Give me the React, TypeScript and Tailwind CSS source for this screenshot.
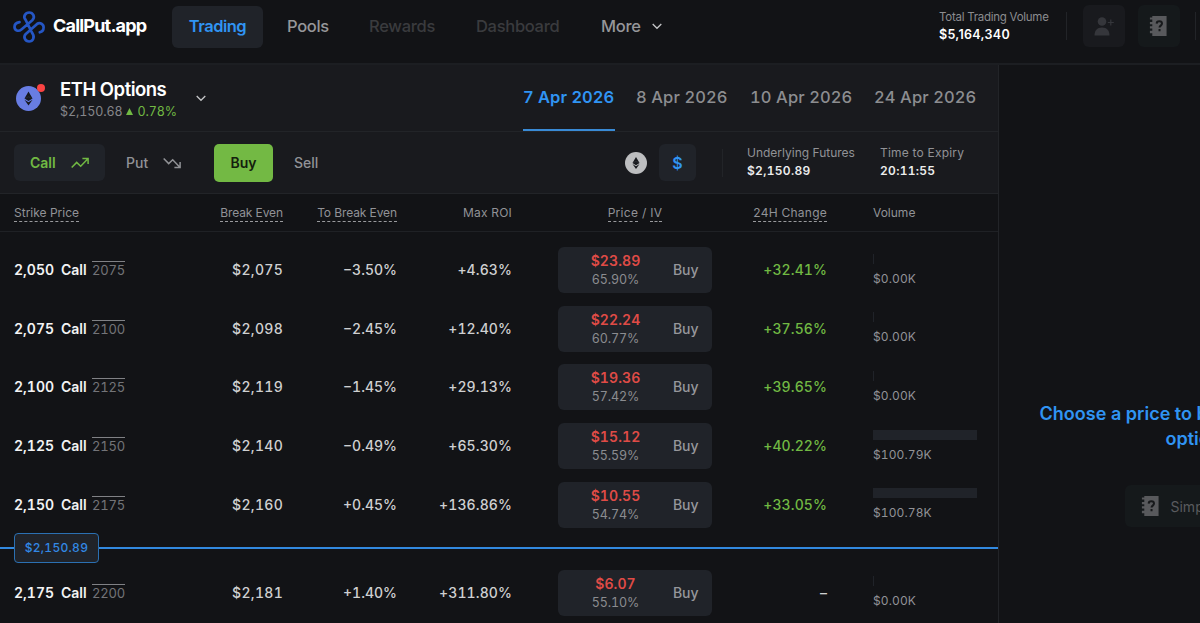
import clsx from "clsx";

const rows = [
  { strike: "2,050", cap: "2075", even: "$2,075", toEven: "−3.50%", roi: "+4.63%", price: "$23.89", iv: "65.90%", change: "+32.41%", volume: "$0.00K" },
  { strike: "2,075", cap: "2100", even: "$2,098", toEven: "−2.45%", roi: "+12.40%", price: "$22.24", iv: "60.77%", change: "+37.56%", volume: "$0.00K" },
  { strike: "2,100", cap: "2125", even: "$2,119", toEven: "−1.45%", roi: "+29.13%", price: "$19.36", iv: "57.42%", change: "+39.65%", volume: "$0.00K" },
  { strike: "2,125", cap: "2150", even: "$2,140", toEven: "−0.49%", roi: "+65.30%", price: "$15.12", iv: "55.59%", change: "+40.22%", volume: "$100.79K" },
  { strike: "2,150", cap: "2175", even: "$2,160", toEven: "+0.45%", roi: "+136.86%", price: "$10.55", iv: "54.74%", change: "+33.05%", volume: "$100.78K" },
  { strike: "2,175", cap: "2200", even: "$2,181", toEven: "+1.40%", roi: "+311.80%", price: "$6.07", iv: "55.10%", change: "–", volume: "$0.00K" },
];

const columns = "grid grid-cols-[153px_130px_114px_115px_200px_115px_171px]";

function Logo() {
  return (
    <svg width="32" height="32" viewBox="0 0 32 32" fill="none" stroke="#2556c4" strokeWidth="2.7" strokeLinecap="round" strokeLinejoin="round">
      <path d="M6.500 11.200C3.500 11.700 1.500 13.500 1.500 16c0 3.400 3.900 5 6.900 2.500L19.300 9.300C22.600 6 20 1.500 16.200 1.500s-6.600 4.300-3.600 7.300l6.900 13.800c2.600 3.800.3 7.900-3.400 7.900s-6.400-4.200-3.300-7.600l11-9.700c3.300-2.400 6.800 0 6.800 3.200 0 2.400-1.500 4.200-3.800 4.900" />
    </svg>
  );
}

function Ether({ size, color }: { size: number; color: string }) {
  return (
    <svg width={size} height={size} viewBox="0 0 26 26">
      <circle cx="13" cy="13" r="13" fill={color} />
      <path d="M13 5.800 8.800 13.100 13 15.600l4.200-2.500zM8.800 14.300 13 20.200l4.200-5.900-4.200 2.500z" fill="#17191e" />
      <path d="m8.800 13.100 4.200-1.900 4.200 1.900" stroke={color} strokeOpacity=".3" strokeWidth=".5" fill="none" />
    </svg>
  );
}

function Chevron() {
  return (
    <svg width="10" height="7" viewBox="0 0 10 7" fill="none" stroke="#c4c5c7" strokeWidth="1.3">
      <path d="m.7 1 4.300 4.300L9.300 1" />
    </svg>
  );
}

function Trend({ down }: { down?: boolean }) {
  return (
    <svg className={clsx(down && "-scale-y-100")} width="18" height="12" viewBox="0 0 18 12" fill="none" stroke="currentColor" strokeWidth="1.5">
      <path d="m.7 10.600 5-5.200 4 3.800L16.600 2M11.400 1.400h5.700v5.700" />
    </svg>
  );
}

function GuideIcon() {
  return (
    <svg width="18" height="20" viewBox="0 0 18 21">
      <path d="M3 0h15v21H3v-3H.5v-2.400H3v-2.400H.5v-2.400H3V8.600H.5V6.200H3V3.800H.5V1.600H3z" fill="#58595c" />
      <path d="M7.600 8c.1-3.300 5.600-3.200 5.600 0 0 2-2.600 2.200-2.600 4.100M10.600 13.700v2.200" stroke="#17191b" strokeWidth="2.100" fill="none" />
    </svg>
  );
}

function UserPlus() {
  return (
    <svg width="20" height="19" viewBox="0 0 20 19" fill="#35363b">
      <circle cx="8" cy="4.500" r="4.300" />
      <path d="M.5 18.500C.5 13.500 3 10.500 8 10.500s7.500 3 7.500 8z" />
      <path d="M16.200 2.500h1.200v2.400h2.400v1.200h-2.400v2.400h-1.200V6.100h-2.400V4.900h2.400z" />
    </svg>
  );
}

function Header() {
  return (
    <header className="flex h-[65px] shrink-0 border-b-2 border-[#1c1e22]">
      <div className="flex h-[53px] w-[172px] shrink-0 items-center pl-[13px]">
        <Logo />
        <span className="ml-2 whitespace-nowrap pb-0.5 text-[18px] font-bold tracking-[-0.8px] text-white">CallPut.app</span>
      </div>
      <nav className="flex h-[53px] w-[767px] shrink-0 items-center text-[16.500px] font-medium tracking-[-0.3px] text-[#96979a]">
        <span className="flex h-[42px] w-[91px] items-center justify-center rounded-md bg-[#202329] font-semibold tracking-[-0.5px] text-[#3094f3]">Trading</span>
        <span className="ml-6 w-[82px]">Pools</span>
        <span className="w-[107px] text-[#3a3b3e]">Rewards</span>
        <span className="w-[125px] text-[#3a3b3e]">Dashboard</span>
        <span className="mr-[11px]">More</span>
        <Chevron />
      </nav>
      <div className="h-[53px] w-[127px] pt-[9px]">
        <p className="whitespace-nowrap text-[11.500px] leading-[16px] tracking-[-0.26px] text-[#8b8c8f]">Total Trading Volume</p>
        <p className="pt-px text-[12.500px] font-semibold leading-[18px] tracking-[0.3px] text-white">$5,164,340</p>
      </div>
      <div className="mt-3 h-7 w-[17px] border-l border-[#222428]" />
      <div className="mt-[5px] flex h-[42px] w-[42px] items-center justify-center rounded-md bg-[#191a1e]"><UserPlus /></div>
      <div className="ml-[13px] mt-[5px] flex h-[42px] w-[42px] items-center justify-center rounded-md bg-[#15191b] pr-[2px]"><GuideIcon /></div>
      <div className="ml-[15px] mt-3 h-7 border-l border-[#222428]" />
    </header>
  );
}

function MarketBar() {
  return (
    <div className="flex h-[67px] shrink-0 border-b border-[#222428] bg-[#191a1e]">
      <div className="flex w-[523px] items-center pl-4">
        <div className="relative">
          <Ether size={25} color="#687de3" />
          <span className="absolute -right-[4px] -top-[2px] size-2 rounded-full bg-[#fa4343]" />
        </div>
        <div className="ml-[19px] w-[136px]">
          <h1 className="text-[18.500px] font-semibold leading-[25px] tracking-[-0.5px] text-white">ETH Options</h1>
          <p className="flex items-center pt-px text-[12.500px] leading-[17px] tabular-nums tracking-[-0.1px] text-[#85868a]">
            $2,150.68
            <svg className="mx-1" width="7" height="7" viewBox="0 0 7 7"><path d="M3.500 0 7 7H0z" fill="#71b943" /></svg>
            <span className="text-[#71b943]">0.78%</span>
          </p>
        </div>
        <Chevron />
      </div>
      <div className="flex h-[66px] gap-[21px] whitespace-nowrap text-[16.500px] font-medium leading-[65px] tabular-nums tracking-[0.1px] text-[#8c8d90]">
        <span className="w-[92px] border-b-2 border-[#398ad5] font-semibold tracking-[0px] text-[#3094f3]">7 Apr 2026</span>
        <span className="w-[93px]">8 Apr 2026</span>
        <span className="w-[103px]">10 Apr 2026</span>
        <span className="w-[103px]">24 Apr 2026</span>
      </div>
    </div>
  );
}

function TradeBar() {
  return (
    <div className="flex h-[62px] shrink-0 items-center border-b border-[#222428] bg-[#191a1e] pl-[14px] text-[14px] font-medium text-[#919296]">
      <div className="flex h-[37px] w-[91px] items-center justify-between rounded-md bg-[#202329] px-4 font-semibold text-[#71b943]">Call <Trend /></div>
      <div className="ml-[21px] flex w-[55px] items-center justify-between">Put <Trend down /></div>
      <div className="ml-[33px] flex h-[38px] w-[59px] items-center justify-center rounded-[5px] bg-[#73b944] font-semibold text-[#14200d]">Buy</div>
      <span className="ml-[21px] w-[331px]">Sell</span>
      <Ether size={22} color="#bdbec0" />
      <div className="ml-3 flex h-[37px] w-[37px] items-center justify-center rounded-md bg-[#202329] text-[16px] font-semibold text-[#3094f3]">$</div>
      <div className="ml-[26px] h-7 w-[25px] border-l border-[#222428]" />
      <div className="w-[133px] pb-[2px] text-[12px] font-normal leading-[18px]">
        <p>Underlying Futures</p>
        <p className="font-semibold tabular-nums tracking-[0.3px] text-[#eceded]">$2,150.89</p>
      </div>
      <div className="pb-[2px] text-[12px] font-normal leading-[18px]">
        <p className="tracking-[0.2px]">Time to Expiry</p>
        <p className="font-semibold tabular-nums tracking-[0.3px] text-[#eceded]">20:11:55</p>
      </div>
    </div>
  );
}

const hint = "border-b border-dashed border-[#999a9d] pb-px";

function TableHead() {
  return (
    <div className={clsx(columns, "h-[38px] shrink-0 items-center border-b border-[#1f2125] text-right text-[12px] leading-[16px] text-[#919296]")}>
      <div className="pl-[14px] text-left"><span className={hint}>Strike Price</span></div>
      <div className="tracking-[-0.1px]"><span className={hint}>Break Even</span></div>
      <div className="tracking-[-0.1px]"><span className={hint}>To Break Even</span></div>
      <div className="tracking-[0.2px]">Max ROI</div>
      <div className="pl-[46px] text-center tracking-[0.3px]"><span className={hint}>Price</span> / <span className={hint}>IV</span></div>
      <div className="tracking-[0.25px]"><span className={hint}>24H Change</span></div>
      <div className="pl-[46px] text-left">Volume</div>
    </div>
  );
}

function OptionRow({ row }: { row: (typeof rows)[number] }) {
  const traded = row.volume !== "$0.00K";
  return (
    <div className={clsx(columns, "h-[58.600px] shrink-0 items-center text-right text-[14px] font-medium tabular-nums tracking-[0.1px] text-[#cfd0d1]")}>
      <div className="flex items-center pb-px pl-[14px] font-semibold tracking-[0px] text-[#f3f3f4]">
        <span className="w-[47px] text-left">{row.strike}</span>
        <span className="w-[31px] text-left">Call</span>
        <span className="border-t border-[#808185] text-[13px] font-normal leading-[16px] tracking-[-0.2px] text-[#737478]">{row.cap}</span>
      </div>
      <div className="pb-px tracking-[0.3px]">{row.even}</div>
      <div className="pb-px tracking-[0px]">{row.toEven}</div>
      <div className="pb-px">{row.roi}</div>
      <div className="ml-[46px] flex h-[46px] w-[154px] items-center rounded-md bg-[#202329]">
        <div className="w-[115px] text-center leading-[19px]">
          <p className="font-semibold text-[#df4b46]">{row.price}</p>
          <p className="text-[12.500px] font-normal tracking-[-0.1px] text-[#8b8c90]">{row.iv}</p>
        </div>
        <span className="pb-px tracking-[-0.1px] text-[#96979b]">Buy</span>
      </div>
      <div className={clsx("pb-px", row.change !== "–" && "text-[#71b943]")}>{row.change}</div>
      <div className="pl-[46px] text-left text-[12px] font-normal leading-[16px] text-[#919296]">
        <div className={clsx("mb-[7px] h-[10px] bg-[#202329]", traded ? "w-[104px]" : "w-px")} />
        {row.volume}
      </div>
    </div>
  );
}

function SpotPrice() {
  return (
    <div className="flex h-[29.300px] shrink-0 items-center pb-[1.300px]">
      <div className="h-[2px] w-[14px] bg-[#3289df]" />
      <div className="flex h-[30px] w-[85px] items-center justify-center rounded border border-[#2b70b2] bg-[#202329] text-[12px] font-medium tabular-nums tracking-[0.3px] text-[#3289e6]">$2,150.89</div>
      <div className="h-[2px] flex-1 bg-[#3289df]" />
    </div>
  );
}

function OrderPanel() {
  return (
    <aside className="flex w-[400px] shrink-0 flex-col items-center border-l border-[#222428] pt-[336px]">
      <h2 className="w-[318px] whitespace-nowrap text-[18px] font-semibold leading-[25px] tracking-[0.02px] text-[#3094f3]">
        <span className="block">Choose a price to build your own</span>
        <span className="block pl-[126px]">options</span>
      </h2>
      <div className="mt-[34px] flex h-[42px] w-[148px] items-center rounded-md bg-[#15191b] pl-4 text-[14px] text-[#5a5b5e]">
        <GuideIcon />
        <span className="ml-3 whitespace-nowrap">Simple Guide</span>
      </div>
    </aside>
  );
}

export default function App() {
  return (
    <div className="flex h-[623px] w-[1200px] flex-col overflow-hidden bg-[#121316] font-['Inter',sans-serif]">
      <Header />
      <div className="flex min-h-0 flex-1 overflow-hidden">
        <main className="flex w-[998px] shrink-0 flex-col overflow-hidden">
          <MarketBar />
          <TradeBar />
          <TableHead />
          <div className="flex flex-col pt-[9px]">
            {rows.slice(0, 5).map((row) => <OptionRow key={row.strike} row={row} />)}
            <SpotPrice />
            {rows.slice(5).map((row) => <OptionRow key={row.strike} row={row} />)}
          </div>
        </main>
        <OrderPanel />
      </div>
    </div>
  );
}
